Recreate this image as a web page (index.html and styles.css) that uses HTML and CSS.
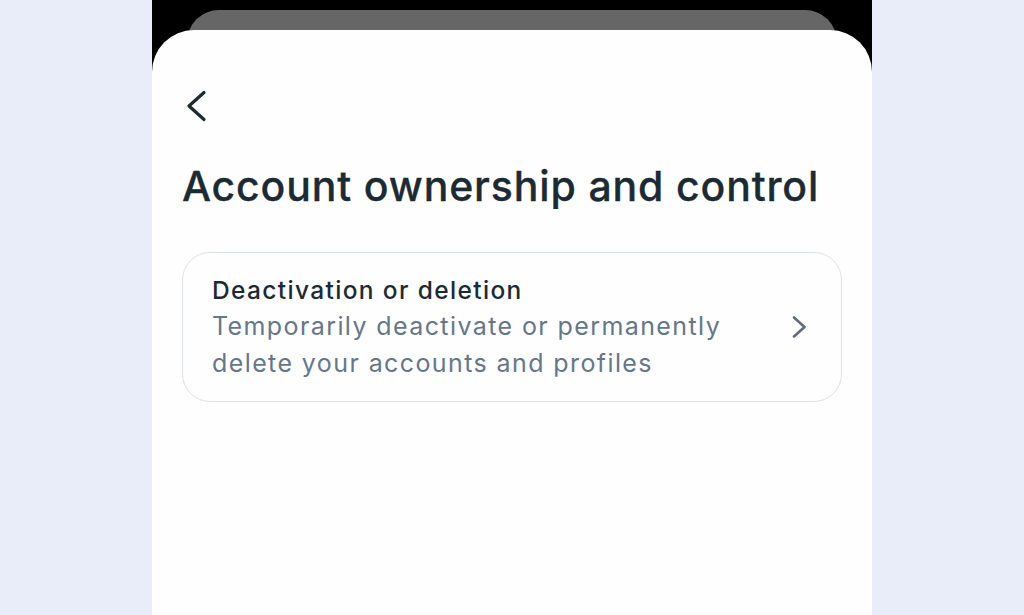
FILE: index.html
```html
<!DOCTYPE html>
<html>
<head>
<meta charset="utf-8">
<link rel="stylesheet" href="styles.css">
</head>
<body>
<div class="page">
  <div class="phone">
    <div class="backsheet"></div>
    <div class="sheet">
      <button class="back" aria-label="Back">
        <svg width="24" height="32" viewBox="0 0 24 32"><path d="M20 2.5 L5 16 L20 29.5" fill="none" stroke="#1c2b33" stroke-width="3.2" stroke-linecap="round" stroke-linejoin="round"/></svg>
      </button>
      <h1 class="title">Account ownership and control</h1>
      <div class="card">
        <div class="card-text">
          <div class="card-title">Deactivation or deletion</div>
          <div class="card-sub">Temporarily deactivate or permanently delete your accounts and profiles</div>
        </div>
        <svg class="chev" width="16" height="22" viewBox="0 0 16 22"><path d="M3 1.5 L13.5 11 L3 20.5" fill="none" stroke="#5d6e7e" stroke-width="2.6" stroke-linecap="round" stroke-linejoin="round"/></svg>
      </div>
    </div>
  </div>
</div>
</body>
</html>
```
FILE: styles.css
```css
html, body { margin: 0; padding: 0; }
body { background: #e9ecf9; font-family: "Inter", "Open Sans", sans-serif; }
.page { width: 1024px; height: 615px; display: flex; justify-content: center; overflow: hidden; }
.phone { width: 720px; height: 615px; background: #000; display: flex; flex-direction: column; align-items: center; }
.backsheet { width: 650px; height: 40px; margin-top: 10px; background: #666666; border-radius: 32px 32px 0 0; flex: none; }
.sheet { width: 720px; flex: 1; margin-top: -20px; background: #fefeff; border-radius: 42px 42px 0 0; padding: 0 30px; box-sizing: border-box; }
.back { background: none; border: 0; padding: 0; margin: 60px 0 0 2px; width: 24px; height: 32px; display: block; }
.title { margin: 40px 0 0 0; font-size: 41px; font-weight: 500; color: #1c2b33; letter-spacing: 0.85px; line-height: 48px; -webkit-text-stroke: 0.3px #1c2b33; }
.card { margin-top: 42px; border: 1.5px solid #dde2e7; border-radius: 28px; height: 150px; box-sizing: border-box; display: flex; align-items: center; padding: 0 34px 0 29px; gap: 40px; }
.card-text { flex: 1; margin-top: 0; }
.card-title { font-size: 24.5px; font-weight: 500; color: #1c2b33; line-height: 36px; letter-spacing: 1.35px; }
.card-sub { font-size: 25px; color: #65778a; line-height: 37px; letter-spacing: 1.4px; }
.chev { flex: none; }
```
